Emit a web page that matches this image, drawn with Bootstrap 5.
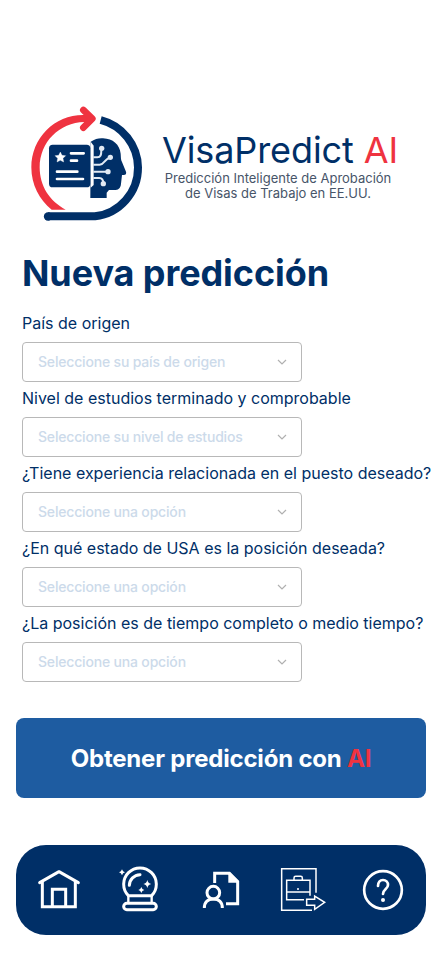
<!DOCTYPE html>
<html lang="es">
<head>
<meta charset="utf-8">
<meta name="viewport" content="width=device-width, initial-scale=1">
<title>VisaPredict AI</title>
<link href="https://cdn.jsdelivr.net/npm/bootstrap@5.3.0/dist/css/bootstrap.min.css" rel="stylesheet">
<style>
:root{--navy:#002f67;--red:#ef3340}
body{font-family:Inter,"Liberation Sans",sans-serif;color:var(--navy);background:#fff}
.screen{width:440px;height:956px;overflow:hidden}
.brand-row{padding:95px 0 0 20px;height:242px}
.brand-logo{width:135px;height:135px;flex:none}
.brand-copy{padding:34px 0 0 7px}
.brand-name{font-size:36px;line-height:42px;white-space:nowrap;letter-spacing:-.1px}
.accent{color:var(--red)}
.tagline{font-size:13px;line-height:15px;color:#475569;width:232px;white-space:nowrap}
.page-title{font-size:36px;line-height:44px;font-weight:700;margin-top:9px;letter-spacing:-.08px}
.form-area{padding:0 0 0 22px;height:467px}
.field-label{font-size:16px;line-height:20px;height:20px;margin-bottom:9px;white-space:nowrap}
.select-box{width:280px;height:40px;border:1px solid #b8b8b8;border-radius:4px;background:#fff;padding:0 13px 0 15px;font-size:14px;font-weight:500;letter-spacing:-.18px;color:#ccdaea;margin-bottom:6px}
.select-box span{padding-bottom:2px}
.fields{margin-top:18px}
.cta{width:410px;height:80px;border-radius:8px;background:#1e5ca1;color:#fff;font-size:24px;font-weight:700;letter-spacing:-.2px;margin:9px 0 0 16px;padding:2px 0 0;border:0}
.tabs-bar{width:410px;height:90px;border-radius:30px;background:var(--navy);margin:47px 0 0 16px}
.tabs-bar svg{height:90px;flex:none}
</style>
</head>
<body>
<main class="screen d-flex flex-column">
<header class="brand-row d-flex align-items-start">
<svg class="brand-logo" viewBox="0 0 405 405" fill="none" role="img" aria-label="VisaPredict">
<path d="M212 60h-19C105 58 34 128 34 217c0 52 24 98 61 127h42C88 318 59 273 59 217c0-75 59-135 134-136h19z" fill="#ef3340"/>
<path d="M190 45l27 26-27 27" stroke="#ef3340" stroke-width="20" stroke-linecap="round" stroke-linejoin="round"/>
<path d="M242 75A149 149 0 0 1 354 217A147 147 0 0 1 225 364H84" stroke="#002f67" stroke-width="24"/>
<circle cx="84" cy="364.500" r="12.500" fill="#002f67"/>
<path d="M212 140c13-8 24-11 37-10 30 1 50 19 53 46 1 12 0 18 4 25l12 29c2 6-1 10-7 10h-5l-3 26c-1 15-10 19-19 19h-17l-7 8v16h-49z" fill="#002f67"/>
<path d="M212 140l9 12v118l-9 8z" fill="#fff"/>
<rect x="87" y="149" width="124" height="128" rx="11" fill="#002f67"/>
<g stroke="#fff" stroke-width="8" stroke-linecap="round"><path d="M153 175h38M153 197h18M111 230h61M111 252h78"/></g>
<path d="M121 171l5 10 11 1-8 8 2 11-10-5-10 5 2-11-8-8 11-1z" fill="#fff" stroke="#fff"/>
<g stroke="#e2eaf4" stroke-width="6"><path d="M220 187h12c10 0 12-7 12-23M220 209h19c15 0 13-17 31-21M220 230h43M220 249h18c10 0 12 7 12 17"/></g>
<g fill="#e2eaf4"><circle cx="245" cy="160" r="8"/><circle cx="271" cy="187" r="8"/><circle cx="264" cy="230" r="8"/><circle cx="250" cy="266" r="8"/></g>
</svg>
<div class="brand-copy">
<div class="brand-name">VisaPredict <span class="accent">AI</span></div>
<div class="tagline text-center">Predicción Inteligente de Aprobación<br>de Visas de Trabajo en EE.UU.</div>
</div>
</header>
<section class="form-area">
<h1 class="page-title mb-0">Nueva predicción</h1>
<div class="fields">
<div class="field-label">País de origen</div>
<div class="select-box d-flex align-items-center justify-content-between" role="combobox"><span>Seleccione su país de origen</span><svg width="12" height="12" viewBox="0 0 12 12" fill="none" stroke="#b0b0b0" stroke-width="1.200"><path d="M2 4l4 4 4-4"/></svg></div>
<div class="field-label">Nivel de estudios terminado y comprobable</div>
<div class="select-box d-flex align-items-center justify-content-between" role="combobox"><span>Seleccione su nivel de estudios</span><svg width="12" height="12" viewBox="0 0 12 12" fill="none" stroke="#b0b0b0" stroke-width="1.200"><path d="M2 4l4 4 4-4"/></svg></div>
<div class="field-label">¿Tiene experiencia relacionada en el puesto deseado?</div>
<div class="select-box d-flex align-items-center justify-content-between" role="combobox"><span>Seleccione una opción</span><svg width="12" height="12" viewBox="0 0 12 12" fill="none" stroke="#b0b0b0" stroke-width="1.200"><path d="M2 4l4 4 4-4"/></svg></div>
<div class="field-label">¿En qué estado de USA es la posición deseada?</div>
<div class="select-box d-flex align-items-center justify-content-between" role="combobox"><span>Seleccione una opción</span><svg width="12" height="12" viewBox="0 0 12 12" fill="none" stroke="#b0b0b0" stroke-width="1.200"><path d="M2 4l4 4 4-4"/></svg></div>
<div class="field-label">¿La posición es de tiempo completo o medio tiempo?</div>
<div class="select-box d-flex align-items-center justify-content-between" role="combobox"><span>Seleccione una opción</span><svg width="12" height="12" viewBox="0 0 12 12" fill="none" stroke="#b0b0b0" stroke-width="1.200"><path d="M2 4l4 4 4-4"/></svg></div>
</div>
</section>
<button class="cta flex-shrink-0" type="button">Obtener predicción con <span class="accent">AI</span></button>
<nav class="tabs-bar d-flex flex-shrink-0" aria-label="Principal">
<svg width="82" viewBox="18 15 246 270" fill="none" stroke="#fff" stroke-width="9" stroke-linejoin="round"><path d="M89 128l58-33 58 33" stroke-linecap="round"/><path d="M97 124v76h99v-76" stroke-linejoin="miter"/><path d="M127 200v-52h40v52" stroke-linejoin="miter"/></svg>
<svg width="82" viewBox="264 15 246 270" fill="none" stroke="#fff" stroke-width="9" stroke-linecap="round" stroke-linejoin="round"><path d="M355 167a49 49 0 1 1 70 0z"/><path d="M355 168v21M425 168v21" stroke-width="7"/><rect x="341" y="190" width="98" height="19" rx="9.500"/><path d="M358 136c1-18 14-31 32-32"/><g fill="#fff" stroke="none"><path d="M412 120q2 10 12 12-10 2-12 12-2-10-12-12 10-2 12-12zM394 141q2 7 9 9-7 2-9 9-2-7-9-9 7-2 9-9zM336 88q2 7 9 9-7 2-9 9-2-7-9-9 7-2 9-9z"/></g></svg>
<svg width="82" viewBox="0 15 246 270" fill="none" stroke="#fff" stroke-width="9"><path d="M104 129V100h44l25 25v66h-35"/><path d="M145 97h5l27 27v4h-32z" fill="#fff" stroke="none"/><circle cx="100" cy="158" r="19"/><path d="M73 204c0-17 10-27 27-27s27 10 27 27"/></svg>
<svg width="82" viewBox="246 15 246 270" fill="none" stroke="#fff" stroke-width="4.500"><path d="M408 158V86H305v125h91"/><path d="M372 179h-52v-58h70v46M320 156h70"/><path d="M342 120v-6q0-5 5-5h15q5 0 5 5v6"/><path d="M380 178h24v-10l30 19-30 21v-12h-24z"/><circle cx="354" cy="147" r="3" fill="#fff" stroke="none"/></svg>
<svg width="82" viewBox="12 15 246 270" fill="none" stroke="#fff" stroke-width="8" stroke-linecap="round"><circle cx="129" cy="150" r="56.500"/><path d="M114 138c0-11 6-18 15-18s15 6 15 15c0 12-15 12-15 27"/><circle cx="129" cy="180" r="6" fill="#fff" stroke="none"/></svg>
</nav>
</main>
<script src="https://cdn.jsdelivr.net/npm/bootstrap@5.3.0/dist/js/bootstrap.bundle.min.js"></script>
</body>
</html>
